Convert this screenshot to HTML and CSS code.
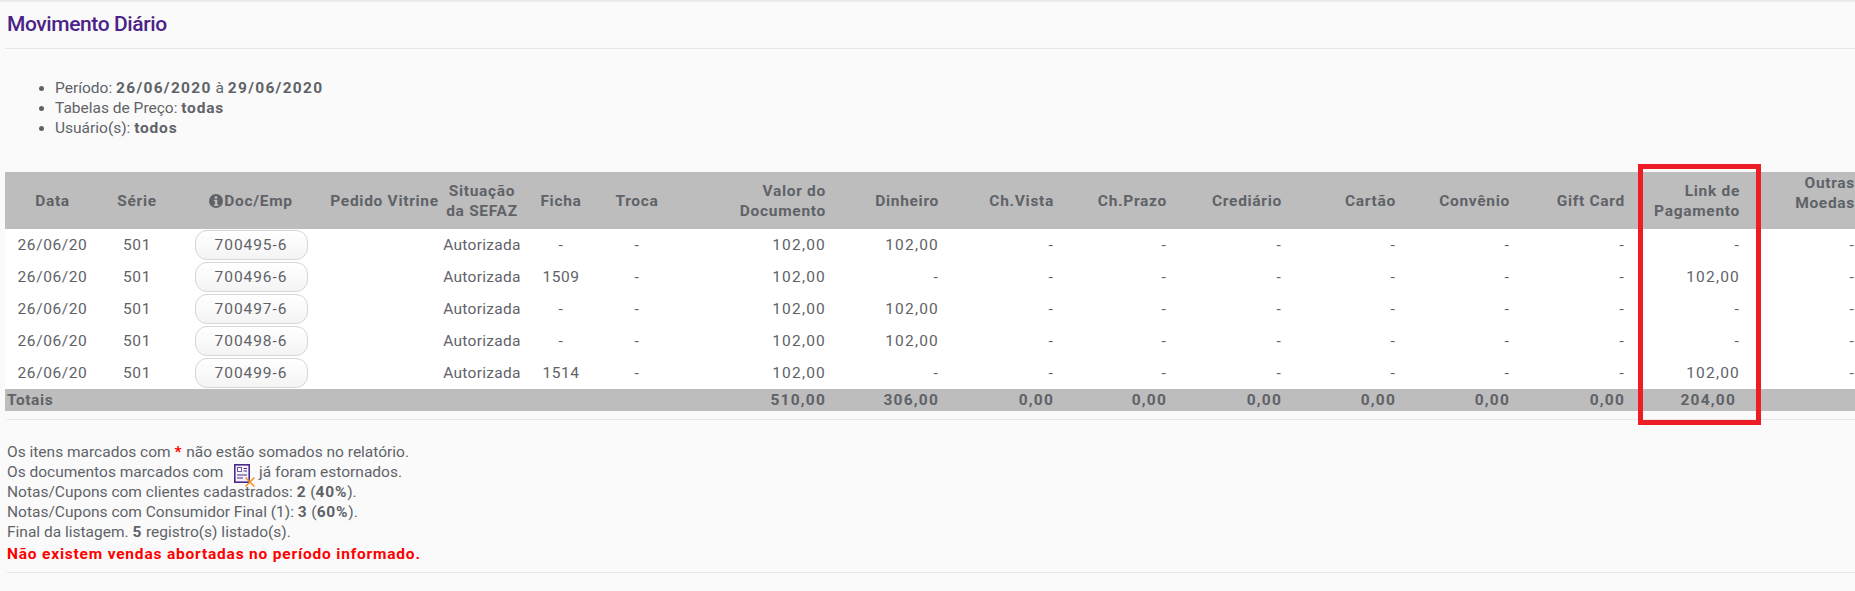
FILE: index.html
```html
<!DOCTYPE html>
<html lang="pt-BR">
<head>
<meta charset="utf-8">
<title>Movimento Diário</title>
<link rel="stylesheet" href="styles.css">
</head>
<body>
<div class="topshadow"></div>
<main class="page">
  <h1 class="title">Movimento Diário</h1>
  <hr class="rule rule-top">
  <ul class="filters">
    <li>Período: <b class="date">26/06/2020</b> à <b class="date">29/06/2020</b></li>
    <li>Tabelas de Preço: <b>todas</b></li>
    <li>Usuário(s): <b>todos</b></li>
  </ul>
  <div class="report">
    <table class="grid">
      <colgroup>
        <col class="c-data"><col class="c-serie"><col class="c-doc"><col class="c-ped"><col class="c-sit"><col class="c-ficha"><col class="c-troca"><col class="c-valor"><col class="c-din"><col class="c-chv"><col class="c-chp"><col class="c-cred"><col class="c-cart"><col class="c-conv"><col class="c-gift"><col class="c-link"><col class="c-out">
      </colgroup>
      <thead>
        <tr>
          <th>Data</th><th>Série</th>
          <th><svg class="info" viewBox="0 0 12 12"><circle cx="6" cy="6" r="6" fill="#5f6368"/><rect x="4.900" y="2" width="2.200" height="2" fill="#bdbdbd"/><path d="M4.200 5h2.900v4h1v1.200H4.200V9h1V6.200H4.200z" fill="#bdbdbd"/></svg>Doc/Emp</th>
          <th>Pedido Vitrine</th><th>Situação<br>da SEFAZ</th><th>Ficha</th><th>Troca</th>
          <th class="num">Valor do<br>Documento</th><th class="num">Dinheiro</th><th class="num">Ch.Vista</th><th class="num">Ch.Prazo</th><th class="num">Crediário</th><th class="num">Cartão</th><th class="num">Convênio</th><th class="num">Gift Card</th><th class="num">Link de<br>Pagamento</th><th class="num th-raised">Outras<br>Moedas</th>
        </tr>
      </thead>
      <tbody>
        <tr><td>26/06/20</td><td>501</td><td><button class="doc">700495-6</button></td><td></td><td class="sit">Autorizada</td><td>-</td><td>-</td><td class="num">102,00</td><td class="num">102,00</td><td class="num">-</td><td class="num">-</td><td class="num">-</td><td class="num">-</td><td class="num">-</td><td class="num">-</td><td class="num">-</td><td class="num">-</td></tr>
        <tr><td>26/06/20</td><td>501</td><td><button class="doc">700496-6</button></td><td></td><td class="sit">Autorizada</td><td>1509</td><td>-</td><td class="num">102,00</td><td class="num">-</td><td class="num">-</td><td class="num">-</td><td class="num">-</td><td class="num">-</td><td class="num">-</td><td class="num">-</td><td class="num">102,00</td><td class="num">-</td></tr>
        <tr><td>26/06/20</td><td>501</td><td><button class="doc">700497-6</button></td><td></td><td class="sit">Autorizada</td><td>-</td><td>-</td><td class="num">102,00</td><td class="num">102,00</td><td class="num">-</td><td class="num">-</td><td class="num">-</td><td class="num">-</td><td class="num">-</td><td class="num">-</td><td class="num">-</td><td class="num">-</td></tr>
        <tr><td>26/06/20</td><td>501</td><td><button class="doc">700498-6</button></td><td></td><td class="sit">Autorizada</td><td>-</td><td>-</td><td class="num">102,00</td><td class="num">102,00</td><td class="num">-</td><td class="num">-</td><td class="num">-</td><td class="num">-</td><td class="num">-</td><td class="num">-</td><td class="num">-</td><td class="num">-</td></tr>
        <tr><td>26/06/20</td><td>501</td><td><button class="doc">700499-6</button></td><td></td><td class="sit">Autorizada</td><td>1514</td><td>-</td><td class="num">102,00</td><td class="num">-</td><td class="num">-</td><td class="num">-</td><td class="num">-</td><td class="num">-</td><td class="num">-</td><td class="num">-</td><td class="num">102,00</td><td class="num">-</td></tr>
      </tbody>
      <tfoot>
        <tr><td class="tot-label" colspan="7">Totais</td><td class="num">510,00</td><td class="num">306,00</td><td class="num">0,00</td><td class="num">0,00</td><td class="num">0,00</td><td class="num">0,00</td><td class="num">0,00</td><td class="num">0,00</td><td class="num tot-link">204,00</td><td></td></tr>
      </tfoot>
    </table>
    <div class="highlight"></div>
  </div>
  <hr class="rule rule-mid">
  <div class="notes">
    <p>Os itens marcados com <b class="red">*</b> não estão somados no relatório.</p>
    <p>Os documentos marcados com <svg class="estorno" viewBox="0 0 21 23"><rect x="0.800" y="0.800" width="14.400" height="17.400" fill="#f4f2fa" stroke="#4b2a8c" stroke-width="1.600"/><rect x="3.500" y="3.500" width="4" height="4" fill="#fff" stroke="#6a5aa8"/><path d="M9.500 4.500h3.500M9.500 7h3.500M3 11h10M3 14h6" stroke="#4b2a8c"/><path d="M11.500 13.500l9 9M20.500 13.500l-9 9" stroke="#f0902a" stroke-width="1.500"/></svg> já foram estornados.</p>
    <p>Notas/Cupons com clientes cadastrados: <b>2</b> (<b>40%</b>).</p>
    <p>Notas/Cupons com Consumidor Final (1): <b>3</b> (<b>60%</b>).</p>
    <p>Final da listagem. <b>5</b> registro(s) listado(s).</p>
    <p class="alert">Não existem vendas abortadas no período informado.</p>
  </div>
  <hr class="rule rule-end">
</main>
</body>
</html>
```

FILE: styles.css
```css
html, body {
  margin: 0;
  height: 591px;
  overflow: hidden;
  background: #fafafa;
}
body {
  font-family: "Roboto", "Liberation Sans", sans-serif;
  font-size: 15.500px;
  line-height: 20px;
  color: #5f6368;
  position: relative;
}
b {
  letter-spacing: 0.800px;
}
b.date {
  letter-spacing: 1.300px;
}
.topshadow {
  position: absolute;
  left: 0;
  right: 0;
  top: 0;
  height: 3px;
  background: linear-gradient(#e4e4e4, #fafafa);
}
.page {
  padding-left: 5px;
}
.title {
  margin: 0;
  padding-top: 12px;
  height: 36px;
  box-sizing: border-box;
  font-size: 21px;
  line-height: 24px;
  font-weight: 500;
  letter-spacing: -0.400px;
  color: #4b2288;
  padding-left: 2px;
}
.rule {
  border: 0;
  height: 1px;
  background: #e6e6e6;
  margin: 0;
}
.rule-top { margin-top: 12px; }
.filters {
  margin: 29px 0 0;
  padding-left: 50px;
  height: 94px;
}
.report {
  position: relative;
  width: 1850px;
}
.grid {
  table-layout: fixed;
  border-collapse: collapse;
  width: 1856px;
}
.c-data { width: 95px; }
.c-serie { width: 74px; }
.c-doc { width: 154px; }
.c-ped { width: 113px; }
.c-sit { width: 82px; }
.c-ficha { width: 76px; }
.c-troca { width: 76px; }
.c-valor { width: 157px; }
.c-din { width: 113px; }
.c-chv { width: 115px; }
.c-chp { width: 113px; }
.c-cred { width: 115px; }
.c-cart { width: 114px; }
.c-conv { width: 114px; }
.c-gift { width: 115px; }
.c-link { width: 115px; }
.c-out { width: 115px; }
th, td {
  padding: 0;
  text-align: center;
  white-space: nowrap;
}
td {
  letter-spacing: 0.600px;
}
td.sit {
  letter-spacing: 0.300px;
}
td.num {
  letter-spacing: 1.200px;
}
thead tr {
  background: #bdbdbd;
  height: 57px;
}
th {
  font-weight: 700;
  line-height: 20px;
  letter-spacing: 0.700px;
}
th.th-raised {
  padding-bottom: 15px;
}
tbody tr {
  background: #fff;
  height: 32px;
}
tfoot tr {
  background: #bdbdbd;
  height: 22px;
}
tfoot td {
  font-weight: 700;
}
.num {
  text-align: right;
  padding-right: 6px;
}
.tot-label {
  text-align: left;
  padding-left: 2px;
}
.tot-link { padding-right: 10px; }
.info {
  width: 14px;
  height: 14px;
  vertical-align: -2px;
  margin-right: 1px;
}
.doc {
  width: 113px;
  height: 30px;
  border: 1px solid #d6d6d6;
  border-radius: 12px;
  background: linear-gradient(#fff, #f4f4f4);
  font: inherit;
  letter-spacing: 0.950px;
  color: inherit;
  padding: 0;
  display: block;
  margin: 0 auto;
}
.highlight {
  position: absolute;
  left: 1633px;
  top: -8px;
  width: 113px;
  height: 251px;
  border: 5px solid #ee1c25;
}
.rule-mid {
  margin: 8px 0 0 2px;
}
.notes {
  margin: 22px 0 0 2px;
}
.notes p {
  margin: 0;
}
.estorno {
  width: 21px;
  height: 23px;
  margin: 0 0 -10px 7px;
}
.red { color: #ff0000; }
.notes .alert {
  color: #ff0000;
  font-weight: 700;
  letter-spacing: 0.800px;
  margin-top: 2px;
}
.rule-end {
  margin: 8px 0 0 2px;
}
```
